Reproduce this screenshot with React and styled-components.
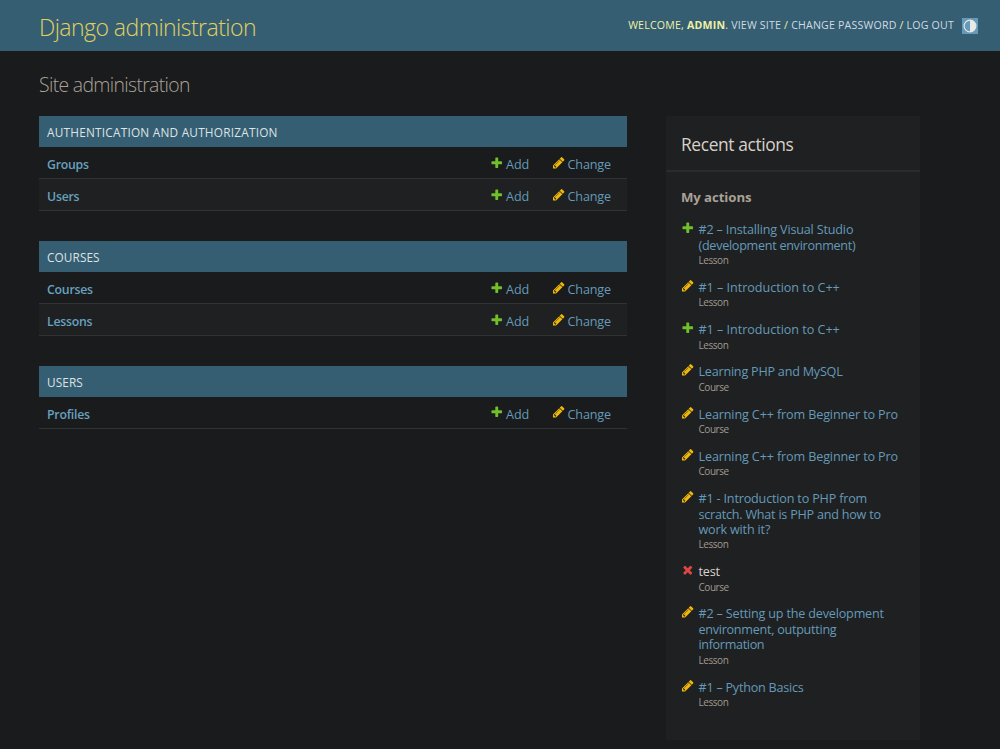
import React from "react";
import styled, { createGlobalStyle } from "styled-components";

const GlobalStyle = createGlobalStyle`
  * { box-sizing: border-box; }
  body {
    margin: 0;
    background: #1a1b1c;
    color: #d8d4cf;
    font-family: "Open Sans", "Noto Sans", sans-serif;
    font-size: 12.6px;
    overflow: hidden;
  }
  h1, h2, h3, p, ul { margin: 0; padding: 0; }
  a { text-decoration: none; }
`;

const Header = styled.header`
  display: flex;
  align-items: center;
  justify-content: space-between;
  height: 51px;
  padding: 0 22px 0 39px;
  background: #355e73;
`;

const Branding = styled.h1`
  padding-top: 2px;
  font-size: 23px;
  font-weight: 300;
  line-height: 30px;
  letter-spacing: -0.54px;
  color: #e0d15e;
  white-space: nowrap;
`;

const UserTools = styled.div`
  display: flex;
  align-items: center;
  gap: 8px;
  font-size: 10.6px;
  line-height: 16px;
  letter-spacing: 0.2px;
  color: #f0f0a4;
  text-transform: uppercase;
  white-space: nowrap;

  span { margin-top: -1px; }
`;

const ToolLink = styled.a`
  color: #d0dbe0;
`;

const ThemeToggle = styled.button`
  display: flex;
  align-items: center;
  justify-content: center;
  width: 16px;
  height: 16px;
  padding: 0;
  border: 0;
  background: #669bb8;
`;

const PageTitle = styled.h1`
  height: 65px;
  padding: 19px 0 0 39px;
  font-size: 19.4px;
  font-weight: 300;
  line-height: 29px;
  letter-spacing: -0.66px;
  color: #aaa299;
`;

const Content = styled.main`
  display: flex;
  align-items: flex-start;
  gap: 39px;
  padding-left: 39px;
`;

const Modules = styled.div`
  width: 588px;
  display: flex;
  flex-direction: column;
  gap: 29.4px;
`;

const Caption = styled.h2`
  height: 31.4px;
  padding-left: 8px;
  background: #355e73;
  color: #dfe3e3;
  font-size: 11.8px;
  font-weight: 400;
  line-height: 32px;
  letter-spacing: ${(p) => p.$spacing || "0.1px"};
  text-transform: uppercase;
`;

const Row = styled.div`
  display: flex;
  align-items: center;
  height: 32px;
  padding: 4.2px 16px 0 8px;
  border-bottom: 1px solid #303233;
  background: ${(p) => (p.$even ? "#1e2021" : "#1a1b1c")};
`;

const ModelLink = styled.a`
  flex: 1;
  color: #69a1c0;
  font-weight: 600;
  font-size: 12.3px;
  line-height: 18px;
  letter-spacing: -0.24px;
`;

const ActionLink = styled.a`
  display: flex;
  align-items: center;
  gap: 2.6px;
  width: ${(p) => p.$width};
  color: #659ab9;
  line-height: 18px;
  letter-spacing: -0.16px;

  svg { margin-top: -5px; }
`;

const Sidebar = styled.aside`
  width: 254px;
  height: 624px;
  background: #1e2021;
`;

const SidebarTitle = styled.h2`
  height: 56px;
  padding-left: 15px;
  border-bottom: 2px solid #292b2c;
  color: #d7d1ca;
  font-size: 17.4px;
  font-weight: 400;
  line-height: 57px;
  letter-spacing: -0.39px;
`;

const SidebarSubtitle = styled.h3`
  padding: 15px 15px 15.3px;
  color: #aaa197;
  font-size: 13.2px;
  font-weight: 700;
  line-height: 20px;
  letter-spacing: -0.08px;
`;

const ActionList = styled.ul`
  display: flex;
  flex-direction: column;
  gap: 10.87px;
  padding-left: 15px;
  list-style: none;
`;

const ActionItem = styled.li`
  display: flex;
  gap: 4px;

  svg { margin-top: -1px; }
`;

const ActionName = styled.a`
  display: block;
  color: ${(p) => (p.$deleted ? "#d8d4cf" : "#659ab9")};
  line-height: 15.45px;
  letter-spacing: ${(p) => p.$spacing || 0}px;
  white-space: nowrap;
`;

const ActionType = styled.span`
  display: block;
  color: #a29a90;
  font-size: 10px;
  line-height: 15.9px;
  letter-spacing: -0.45px;
`;

const Icon = styled.svg`
  flex: none;
  width: 13.5px;
  height: 13.5px;
`;

const icons = {
  add: {
    fill: "#70bf2b",
    d: "M1600 796v192q0 40-28 68t-68 28h-416v416q0 40-28 68t-68 28h-192q-40 0-68-28t-28-68v-416h-416q-40 0-68-28t-28-68v-192q0-40 28-68t68-28h416v-416q0-40 28-68t68-28h192q40 0 68 28t28 68v416h416q40 0 68 28t28 68z",
  },
  change: {
    fill: "#efb80b",
    d: "M491 1536l91-91-235-235-91 91v107h128v128h107zm523-928q0-22-22-22-10 0-17 7l-542 542q-7 7-7 17 0 22 22 22 10 0 17-7l542-542q7-7 7-17zm-54-192l416 416-832 832h-416v-416zm683 96q0 53-37 90l-166 166-416-416 166-165q36-38 90-38 53 0 91 38l235 234q37 39 37 91z",
  },
  delete: {
    fill: "#dd4646",
    d: "M1490 1322q0 40-28 68l-136 136q-28 28-68 28t-68-28l-294-294-294 294q-28 28-68 28t-68-28l-136-136q-28-28-28-68t28-68l294-294-294-294q-28-28-28-68t28-68l136-136q28-28 68-28t68 28l294 294 294-294q28-28 68-28t68 28l136 136q28 28 28 68t-28 68l-294 294 294 294q28 28 28 68z",
  },
};

const ActionIcon = ({ type }) => (
  <Icon viewBox="0 0 1792 1792">
    <path fill={icons[type].fill} d={icons[type].d} />
  </Icon>
);

const apps = [
  { name: "Authentication and Authorization", spacing: "0.23px", models: ["Groups", "Users"] },
  { name: "Courses", models: ["Courses", "Lessons"] },
  { name: "Users", models: ["Profiles"] },
];

const actions = [
  {
    type: "add",
    lines: ["#2 – Installing Visual Studio", "(development environment)"],
    spacing: [-0.17, -0.28],
    model: "Lesson",
  },
  { type: "change", lines: ["#1 – Introduction to C++"], spacing: [-0.03], model: "Lesson" },
  { type: "add", lines: ["#1 – Introduction to C++"], spacing: [-0.03], model: "Lesson" },
  { type: "change", lines: ["Learning PHP and MySQL"], spacing: [-0.22], model: "Course" },
  { type: "change", lines: ["Learning C++ from Beginner to Pro"], spacing: [-0.13], model: "Course" },
  { type: "change", lines: ["Learning C++ from Beginner to Pro"], spacing: [-0.13], model: "Course" },
  {
    type: "change",
    lines: ["#1 - Introduction to PHP from", "scratch. What is PHP and how to", "work with it?"],
    spacing: [-0.18, -0.23, -0.17],
    model: "Lesson",
  },
  { type: "delete", lines: ["test"], spacing: [-0.15], model: "Course" },
  {
    type: "change",
    lines: ["#2 – Setting up the development", "environment, outputting", "information"],
    spacing: [-0.18, -0.27, -0.34],
    model: "Lesson",
  },
  { type: "change", lines: ["#1 – Python Basics"], spacing: [-0.23], model: "Lesson" },
];

const AppModule = ({ app }) => (
  <section>
    <Caption $spacing={app.spacing}>{app.name}</Caption>
    {app.models.map((model, i) => (
      <Row key={model} $even={i % 2 === 1}>
        <ModelLink>{model}</ModelLink>
        <ActionLink $width="61.5px">
          <ActionIcon type="add" />
          Add
        </ActionLink>
        <ActionLink $width="59.5px">
          <ActionIcon type="change" />
          Change
        </ActionLink>
      </Row>
    ))}
  </section>
);

const App = () => {
  return (
    <>
      <GlobalStyle />
      <Header>
        <Branding>Django administration</Branding>
        <UserTools>
          <span>
            Welcome, <strong>admin</strong>. <ToolLink>View site</ToolLink> /{" "}
            <ToolLink>Change password</ToolLink> / <ToolLink>Log out</ToolLink>
          </span>
          <ThemeToggle>
            <svg width="14" height="14" viewBox="0 0 14 14">
              <circle cx="7" cy="7" r="5.9" fill="none" stroke="#e4eaec" strokeWidth="1.1" />
              <path d="M7 1.1a5.9 5.9 0 0 1 0 11.8z" fill="#e9e9e6" />
            </svg>
          </ThemeToggle>
        </UserTools>
      </Header>
      <PageTitle>Site administration</PageTitle>
      <Content>
        <Modules>
          {apps.map((app) => (
            <AppModule key={app.name} app={app} />
          ))}
        </Modules>
        <Sidebar>
          <SidebarTitle>Recent actions</SidebarTitle>
          <SidebarSubtitle>My actions</SidebarSubtitle>
          <ActionList>
            {actions.map((action, i) => (
              <ActionItem key={i}>
                <ActionIcon type={action.type} />
                <div>
                  {action.lines.map((line, n) => (
                    <ActionName
                      key={line}
                      $deleted={action.type === "delete"}
                      $spacing={action.spacing[n]}
                    >
                      {line}
                    </ActionName>
                  ))}
                  <ActionType>{action.model}</ActionType>
                </div>
              </ActionItem>
            ))}
          </ActionList>
        </Sidebar>
      </Content>
    </>
  );
};

export default App;
